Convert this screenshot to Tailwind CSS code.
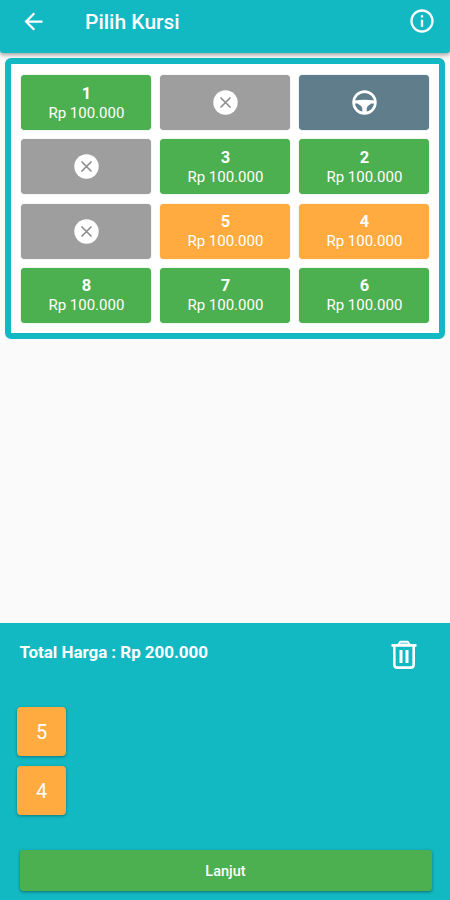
<!DOCTYPE html>
<html lang="id">

<head>
  <meta charset="UTF-8">
  <meta name="viewport" content="width=device-width, initial-scale=1.0">
  <title>Pilih Kursi</title>
  <script src="https://cdn.jsdelivr.net/npm/@tailwindcss/browser@4"></script>
</head>

<body class="bg-[#fafafa] font-['Roboto','Liberation_Sans',sans-serif] text-white">
  <div class="flex flex-col w-[450px] h-[900px] overflow-hidden">
    <header class="relative shrink-0 flex items-center h-[53px] pb-[11px] pl-[19.5px] pr-[14px] bg-[#12b8c2] rounded-b-[3px] shadow-[0_2px_4px_rgba(0,0,0,0.35)]">
      <svg class="w-[27px] h-[27px]" viewBox="0 0 24 24" fill="currentColor">
        <path d="M20 11H7.83l5.59-5.59L12 4l-8 8 8 8 1.41-1.41L7.83 13H20v-2z" />
      </svg>
      <h1 class="flex-1 ml-[38.5px] pt-px text-[21px] leading-[24px] font-medium">Pilih Kursi</h1>
      <svg class="w-[28px] h-[28px]" viewBox="0 0 24 24" fill="currentColor">
        <path d="M11 7h2v2h-2zm0 4h2v6h-2zm1-9C6.48 2 2 6.48 2 12s4.48 10 10 10 10-4.48 10-10S17.52 2 12 2zm0 18c-4.41 0-8-3.59-8-8s3.59-8 8-8 8 3.59 8 8-3.59 8-8 8z" />
      </svg>
    </header>

    <main id="seats" class="shrink-0 grid grid-cols-3 auto-rows-[55px] gap-x-[9px] gap-y-[9.25px] w-[440px] h-[281px] mt-[5px] ml-[5.4px] px-[10px] pt-[11px] bg-white border-6 border-[#12b8c2] rounded-[6px]"></main>

    <section class="mt-auto shrink-0 h-[277px] bg-[#12b8c2] flex flex-col">
      <div class="flex items-center justify-between h-[60px] pl-[19.5px] pr-[30px]">
        <p class="text-[17px] font-bold tracking-[-0.05px]">Total Harga : Rp 200.000</p>
        <svg class="w-[33px] h-[33px] mt-[3px]" viewBox="0 0 33 33" fill="none" stroke="currentColor" stroke-width="2.6">
          <path d="M4.5 7.4h25" stroke-width="2.8" />
          <path d="M11 7L13.3 3.6h7.4L23 7z" fill="currentColor" fill-opacity="0.5" stroke-width="1.8" stroke-linejoin="round" />
          <path d="M7.3 8v18.4q0 3.2 3.2 3.2h13q3.2 0 3.2-3.2V8" />
          <path d="M14 12v13M20 12v13" stroke-width="3" />
        </svg>
      </div>
      <div class="flex flex-col gap-[10px] pt-[24px] pl-[17px]">
        <div class="flex items-center justify-center w-[49px] h-[49px] rounded-[4px] bg-[#ffab40] text-[20px] shadow-[0_1px_3px_rgba(0,0,0,0.35)]">5</div>
        <div class="flex items-center justify-center w-[49px] h-[49px] rounded-[4px] bg-[#ffab40] text-[20px] shadow-[0_1px_3px_rgba(0,0,0,0.35)]">4</div>
      </div>
      <button class="mt-auto mb-[9px] ml-[19.5px] w-[412px] h-[41px] pt-[2px] rounded-[3px] bg-[#4caf50] text-[14.5px] font-medium shadow-[0_1px_3px_rgba(0,0,0,0.4)]">Lanjut</button>
    </section>
  </div>

  <script>
    const seats = [1, "x", "driver", "x", 3, 2, "x", 5, 4, 8, 7, 6];
    const selected = [5, 4];

    const closeIcon = `<svg class="w-[25px] h-[25px]" viewBox="0 0 25 25">
        <circle cx="12.5" cy="12.5" r="12.2" fill="#fff" />
        <path d="M7.5 7.5l10 10M17.5 7.5l-10 10" stroke="#8c8c8c" stroke-width="1.6" />
      </svg>`;
    const wheelIcon = `<svg class="w-[25px] h-[25px]" viewBox="0 0 25 25" fill="none" stroke="#fff">
        <circle cx="12.5" cy="12.5" r="10.9" stroke-width="2.6" />
        <path d="M2.5 10.4Q12.5 9 22.5 10.4V13.4H19.5Q16 15 14.7 18.2V23.2H10.3V18.2Q9 15 5.5 13.4H2.5z" fill="#fff" stroke="none" />
      </svg>`;

    document.getElementById("seats").innerHTML = seats.map((seat) => {
      if (seat === "x") {
        return `<div class="flex items-center justify-center rounded-[4px] bg-[#9e9e9e] shadow-[0_0_1px_#9e9e9e]">${closeIcon}</div>`;
      }
      if (seat === "driver") {
        return `<div class="flex items-center justify-center rounded-[4px] bg-[#607d8b] shadow-[0_0_1px_#607d8b]">${wheelIcon}</div>`;
      }
      const color = selected.includes(seat) ? "bg-[#ffab40] shadow-[0_0_1px_#ffab40]" : "bg-[#4caf50] shadow-[0_0_1px_#4caf50]";
      return `<div class="flex flex-col items-center justify-center pt-px rounded-[4px] ${color}">
          <b class="text-[16.5px] leading-[20px]">${seat}</b>
          <span class="text-[15px] leading-[19px]">Rp 100.000</span>
        </div>`;
    }).join("");
  </script>
</body>

</html>
